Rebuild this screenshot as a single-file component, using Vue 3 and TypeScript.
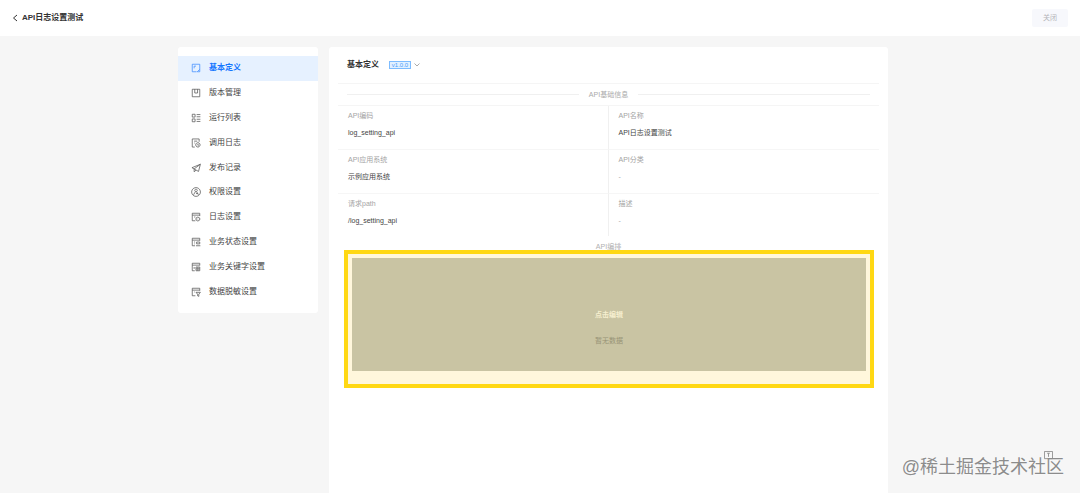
<script setup lang="ts">
import { ref } from 'vue'

interface MenuItem {
  label: string
  icon: string
}

interface Field {
  label: string
  value: string
}

const active = ref(0)

const menu: MenuItem[] = [
  { label: '基本定义', icon: 'M9 14H2V2h12v8M5 8.5V5h3M14 10l-4 4h4z' },
  { label: '版本管理', icon: 'M2 2h12v12H2zM6 2v6h4.5V2' },
  { label: '运行列表', icon: 'M2 2h4.5v4.5H2zM2 9.5h4.5V14H2zM9 2.5h6M9 6h6M9 10h6M9 13.5h6' },
  { label: '调用日志', icon: 'M13 6V1.5H2V14.5h4M5 5h5M5 8h1M11 7.5a3.5 3.5 0 1 0 0.1 0zM11 9.5v2h1.5' },
  { label: '发布记录', icon: 'M15 2L1.5 7.5L5 9.5L12 13.5zM15 2L5 9.5V14l3-2.5' },
  { label: '权限设置', icon: 'M8 1a7 7 0 1 0 0.1 0zM8 3.5a2 2 0 1 0 0.1 0zM4 12.5L7 7.5M9 7.5l3 5M8 10.5h3' },
  { label: '日志设置', icon: 'M14 6.5V2H2v12h5M2 5h12M5 8h2M11 8l3 1.7v3L11 14.5l-3-1.8v-3zM10.5 11.2h1' },
  { label: '业务状态设置', icon: 'M14 6V2H2v12h4.5M2 5h12M5 8h1.5M5 11h1M9 8h5v3H9zM8 14h7' },
  { label: '业务关键字设置', icon: 'M14 5.5V2H2v12h4M2 5h12M5 8v3M8 8h6v6H8zM8 11h6M11 8v6' },
  { label: '数据脱敏设置', icon: 'M14 6V2H2v12h5M2 5h12M5 8h1M8 8.5h7l-2.5 3V15L10.5 14v-2.5z' },
]

const fields: Field[] = [
  { label: 'API编码', value: 'log_setting_api' },
  { label: 'API名称', value: 'API日志设置测试' },
  { label: 'API应用系统', value: '示例应用系统' },
  { label: 'API分类', value: '-' },
  { label: '请求path', value: '/log_setting_api' },
  { label: '描述', value: '-' },
]
</script>

<template>
  <div class="page">
    <header class="topbar">
      <button class="back" type="button" aria-label="返回">
        <svg viewBox="0 0 6 8"><path d="M5 1L1.5 4L5 7" /></svg>
      </button>
      <h1>API日志设置测试</h1>
      <button class="close" type="button">关闭</button>
    </header>

    <div class="body">
      <nav class="sidebar">
        <ul>
          <li v-for="(item, i) in menu" :key="item.label">
            <button
              type="button"
              class="item"
              :class="{ active: i === active }"
              @click="active = i"
            >
              <svg viewBox="0 0 16 16"><path :d="item.icon" /></svg>
              <span>{{ item.label }}</span>
            </button>
          </li>
        </ul>
      </nav>

      <main class="panel">
        <div class="panel-head">
          <h2>基本定义</h2>
          <button class="version" type="button">
            <span class="tag">v1.0.0</span>
            <svg viewBox="0 0 6 4"><path d="M0.5 0.5L3 3L5.5 0.5" /></svg>
          </button>
        </div>

        <div class="divider"><span>API基础信息</span></div>

        <dl class="fields">
          <div v-for="field in fields" :key="field.label" class="field">
            <dt>{{ field.label }}</dt>
            <dd :class="{ empty: field.value === '-' }">{{ field.value }}</dd>
          </div>
        </dl>

        <div class="caption">API编排</div>

        <section class="highlight">
          <div class="canvas">
            <button type="button" class="edit">点击编辑</button>
            <p>暂无数据</p>
          </div>
        </section>
      </main>
    </div>

    <div class="watermark">
      <svg viewBox="0 0 10 10"><path d="M0.5 0.5h9v8h-9zM5 2.5v4M3.5 2.5h3" /></svg>
      @稀土掘金技术社区
    </div>
  </div>
</template>

<style>
body {
  margin: 0;
}
</style>

<style scoped>
.page {
  position: relative;
  display: flex;
  flex-direction: column;
  box-sizing: border-box;
  min-height: 100vh;
  background: #f6f6f6;
  color: #444;
  font-family: "Liberation Sans", "Noto Sans CJK SC", sans-serif;
  font-size: 8px;
  line-height: 12px;
}

button {
  margin: 0;
  padding: 0;
  border: 0;
  background: none;
  color: inherit;
  font: inherit;
  cursor: pointer;
}

h1,
h2,
p,
ul,
dl,
dd {
  margin: 0;
  padding: 0;
}

svg {
  display: block;
  fill: none;
  stroke: currentColor;
}

.topbar {
  display: flex;
  align-items: center;
  height: 36px;
  padding: 0 12px;
  background: #fff;
}

.back svg {
  width: 6px;
  height: 8px;
  stroke: #333;
}

.topbar h1 {
  margin-left: 4px;
  color: #333;
  font-size: 8px;
  font-weight: 600;
}

.close {
  margin-left: auto;
  width: 36px;
  height: 18px;
  border-radius: 2px;
  background: #f7f8fc;
  color: #b4b4b8;
  font-size: 7px;
}

.body {
  flex: 1;
  display: flex;
  justify-content: center;
  gap: 11px;
  padding: 11px 14px 0 0;
}

.sidebar {
  align-self: flex-start;
  box-sizing: border-box;
  width: 140px;
  padding: 9px 0;
  border-radius: 3px;
  background: #fff;
}

.sidebar ul {
  display: flex;
  flex-direction: column;
  height: 248px;
  list-style: none;
}

.sidebar li {
  display: flex;
  flex: 1;
}

.item {
  display: flex;
  flex: 1;
  align-items: center;
  gap: 8px;
  padding-left: 13px;
}

.item svg {
  width: 10px;
  height: 10px;
  stroke: #555;
  stroke-width: 1.2;
}

.item.active {
  background: #e6f1ff;
  color: #1677ff;
  font-weight: 600;
}

.item.active svg {
  stroke: #3f8cff;
}

.panel {
  box-sizing: border-box;
  width: 559px;
  padding: 0 9px;
  border-radius: 3px 3px 0 0;
  background: #fff;
}

.panel-head {
  display: flex;
  align-items: center;
  gap: 10px;
  height: 36px;
  padding-left: 9px;
  border-bottom: 1px solid #f5f5f5;
}

.panel-head h2 {
  color: #333;
  font-size: 8px;
  font-weight: 600;
}

.version {
  display: flex;
  align-items: center;
  gap: 3px;
  color: #aaa;
}

.tag {
  width: 20px;
  border: 1px solid #7dbcff;
  background: #e3f1ff;
  color: #4aa0fb;
  font-size: 6px;
  line-height: 6px;
}

.version svg {
  width: 6px;
  height: 4px;
}

.divider {
  display: flex;
  align-items: center;
  gap: 10px;
  height: 21px;
  padding: 0 9px;
  border-bottom: 1px solid #f5f5f5;
  color: #aaa;
  font-size: 7px;
}

.divider::before,
.divider::after {
  content: "";
  flex: 1;
  border-top: 1px solid #f0f0f0;
}

.fields {
  display: grid;
  grid-template-columns: 1fr 1fr;
}

.field {
  box-sizing: border-box;
  height: 44px;
  padding: 4px 10px 0;
  border-bottom: 1px solid #f6f6f6;
  font-size: 7px;
}

.field:nth-child(odd) {
  border-right: 1px solid #f0f0f0;
}

.field:nth-last-child(-n + 2) {
  height: 42px;
  border-bottom: 0;
}

.field dt {
  color: #a4a4a4;
}

.field dd {
  margin-top: 5px;
  color: #444;
}

.field dd.empty {
  color: #aaa;
}

.caption {
  height: 14px;
  padding-top: 5px;
  box-sizing: border-box;
  color: #b0b0b0;
  font-size: 7px;
  text-align: center;
}

.highlight {
  margin: 0 5px 0 6px;
  padding: 4px 4px 13px;
  border: 4px solid #ffd813;
  background: #fff7dc;
}

.canvas {
  display: flex;
  flex-direction: column;
  align-items: center;
  gap: 14px;
  box-sizing: border-box;
  height: 113px;
  padding-top: 51px;
  background: #c9c4a3;
  color: #979376;
  font-size: 7px;
}

.edit {
  color: #f6efcf;
  font-weight: 600;
}

.watermark {
  position: absolute;
  right: 16px;
  bottom: 14px;
  color: #8c8c8c;
  font-size: 18px;
  line-height: 24px;
  text-shadow: 0 0 2px #fff;
}

.watermark svg {
  position: absolute;
  top: -4px;
  right: 11px;
  width: 9px;
  height: 9px;
}
</style>
